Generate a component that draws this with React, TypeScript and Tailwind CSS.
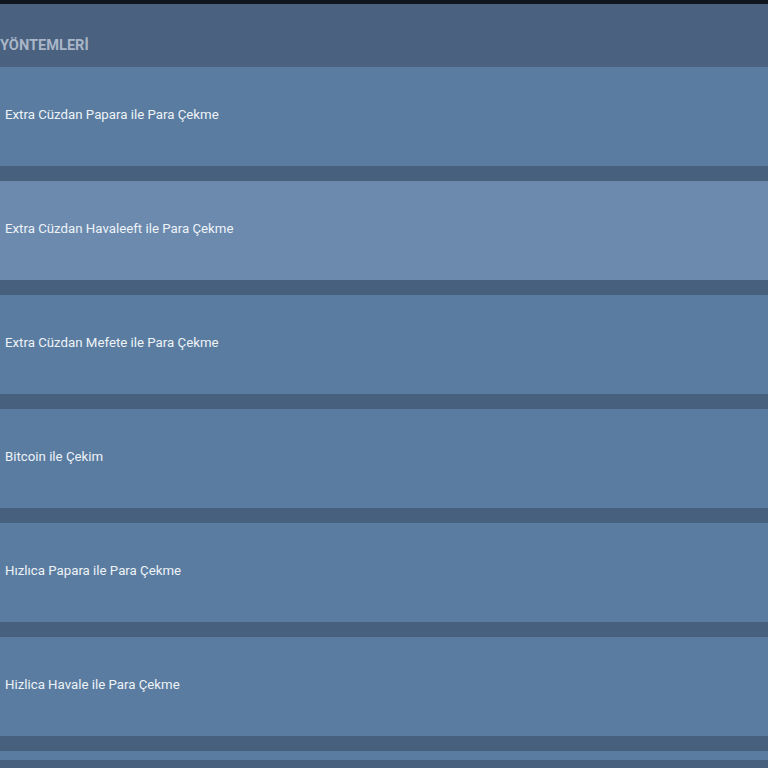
import React from "react";

const methods = [
  "Extra Cüzdan Papara ile Para Çekme",
  "Extra Cüzdan Havaleeft ile Para Çekme",
  "Extra Cüzdan Mefete ile Para Çekme",
  "Bitcoin ile Çekim",
  "Hızlıca Papara ile Para Çekme",
  "Hizlica Havale ile Para Çekme",
];

export default function App() {
  const active = 1;
  return (
    <div className="w-[768px] h-[768px] overflow-hidden bg-[#46607e] flex flex-col" style={{ fontFamily: "Roboto, 'Noto Sans', sans-serif" }}>
      <div className="h-[4px] shrink-0 bg-[#10161f]" />
      <div className="h-[63px] shrink-0 bg-[#4a6180] flex items-center pt-[20px]">
        <span className="text-[14.6px] font-bold text-[#a9b6c7] leading-none">YÖNTEMLERİ</span>
      </div>
      <div className="flex flex-col gap-[15px]">
        {methods.map((m, i) => (
          <div
            key={m}
            className={`h-[99px] shrink-0 flex items-center pl-[5px] pb-[3px] ${i === active ? "bg-[#6b8aae]" : "bg-[#5a7ca0]"}`}
          >
            <span className="text-[13.25px] text-[#eef3f8] leading-none">{m}</span>
          </div>
        ))}
        <div className="h-[9px] shrink-0 bg-[#5a7ca0]" />
      </div>
    </div>
  );
}
